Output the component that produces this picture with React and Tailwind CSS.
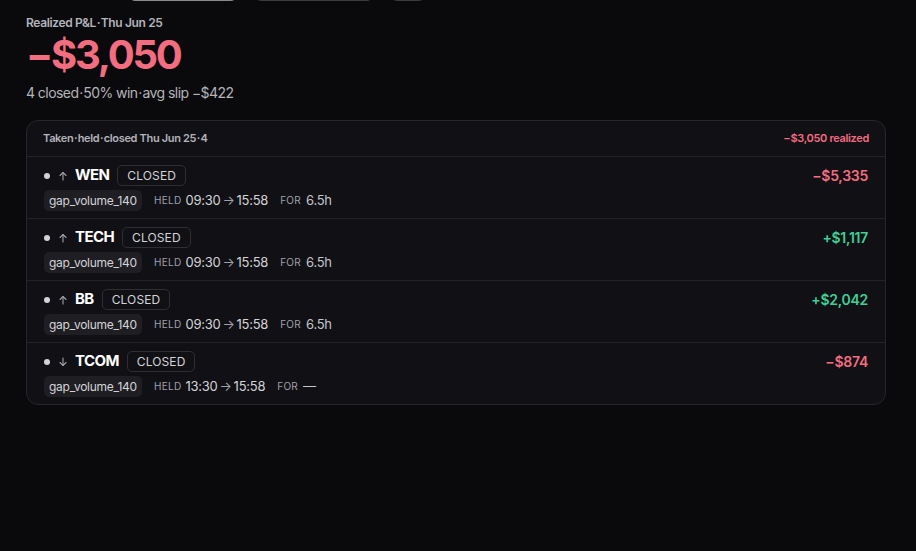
import React from "react";

const trades = [
  { sym: "WEN", dir: "up", held: "09:30", out: "15:58", dur: "6.5h", pnl: "−$5,335", win: false },
  { sym: "TECH", dir: "up", held: "09:30", out: "15:58", dur: "6.5h", pnl: "+$1,117", win: true },
  { sym: "BB", dir: "up", held: "09:30", out: "15:58", dur: "6.5h", pnl: "+$2,042", win: true },
  { sym: "TCOM", dir: "down", held: "13:30", out: "15:58", dur: "—", pnl: "−$874", win: false },
];

const dot = "\u200a·\u200a";

function Arrow({ dir }) {
  return (
    <svg width="10" height="10" viewBox="0 0 10 10" fill="none" stroke="#a1a1aa" strokeWidth="1.1" strokeLinecap="round" strokeLinejoin="round">
      {dir === "up" ? (
        <>
          <path d="M5 9V1.5" />
          <path d="M2 4.5L5 1.5L8 4.5" />
        </>
      ) : (
        <>
          <path d="M5 1V8.5" />
          <path d="M2 5.5L5 8.5L8 5.5" />
        </>
      )}
    </svg>
  );
}

function TradeRow({ t }) {
  return (
    <div className="flex justify-between border-t border-[#232329] pl-[17px] pr-[17px] pt-[8px] pb-[7px]">
      <div className="flex flex-col gap-[4px]">
        <div className="flex items-center h-[21px]">
          <span className="w-[6px] h-[6px] rounded-full bg-[#d4d4d8]" />
          <span className="ml-[8px] flex items-center"><Arrow dir={t.dir} /></span>
          <span className="ml-[7px] text-[15px] font-bold text-white tracking-[-0.04em]">{t.sym}</span>
          <span className="ml-[8px] h-[21px] px-[9px] flex items-center rounded-[5px] border border-[#2e2e35] text-[12px] text-[#d4d4d8] tracking-[0.01em]">
            CLOSED
          </span>
        </div>
        <div className="flex items-center h-[21px] text-[13px] text-[#d4d4d8] tracking-[-0.02em]">
          <span className="h-[21px] px-[5px] flex items-center rounded-[5px] bg-[#1e1e23] text-[12px]">gap_volume_140</span>
          <span className="ml-[12px] text-[10px] text-[#a1a1aa] tracking-[0.03em]">HELD</span>
          <span className="ml-[4px]">{t.held}</span>
          <span className="mx-[2px] text-[#a1a1aa]">→</span>
          <span>{t.out}</span>
          <span className="ml-[12px] text-[10px] text-[#a1a1aa] tracking-[0.03em]">FOR</span>
          <span className="ml-[5px] text-[#c4c4ca]">{t.dur}</span>
        </div>
      </div>
      <div className={`h-[21px] flex items-center text-[14px] font-semibold tracking-[-0.02em] ${t.win ? "text-[#3fcf95]" : "text-[#f26d80]"}`}>
        {t.pnl}
      </div>
    </div>
  );
}

export default function App() {
  return (
    <div className="min-h-screen bg-[#0a0a0c] overflow-hidden" style={{ fontFamily: "Inter, 'Noto Sans', sans-serif" }}>
      <div className="flex gap-[18px] pl-[129px] -mt-[30px] h-[31px]">
        <div className="w-[108px] h-[31px] rounded-[6px] border border-[#8a8a90] bg-[#1c1c20]" />
        <div className="w-[118px] h-[31px] rounded-[6px] border border-[#3a3a40]" />
        <div className="w-[34px] h-[31px] rounded-[6px] border border-[#3a3a40]" />
      </div>
      <div className="px-[26px] pt-[14px]">
        <div className="text-[12px] leading-[16px] font-semibold text-[#b4b4bb] tracking-[-0.03em]">Realized P&amp;L{dot}Thu Jun 25</div>
        <div className="text-[40px] leading-[48px] font-bold text-[#f26d80] tracking-[-0.055em]">−$3,050</div>
        <div className="mt-[4px] text-[14px] leading-[20px] text-[#b4b4bb] tracking-[-0.04em]">4 closed{dot}50% win{dot}avg slip −$422</div>

        <div className="mt-[17px] w-[860px] rounded-[12px] border border-[#26262c] bg-[#101015] overflow-hidden">
          <div className="h-[35px] flex items-center justify-between px-[16px]">
            <span className="text-[11px] font-semibold text-[#b4b4bb] tracking-[-0.03em]">Taken{dot}held{dot}closed Thu Jun 25{dot}4</span>
            <span className="text-[11px] font-semibold text-[#f26d80] tracking-[-0.03em]">−$3,050 realized</span>
          </div>
          {trades.map((t) => (
            <TradeRow key={t.sym} t={t} />
          ))}
        </div>
      </div>
    </div>
  );
}
